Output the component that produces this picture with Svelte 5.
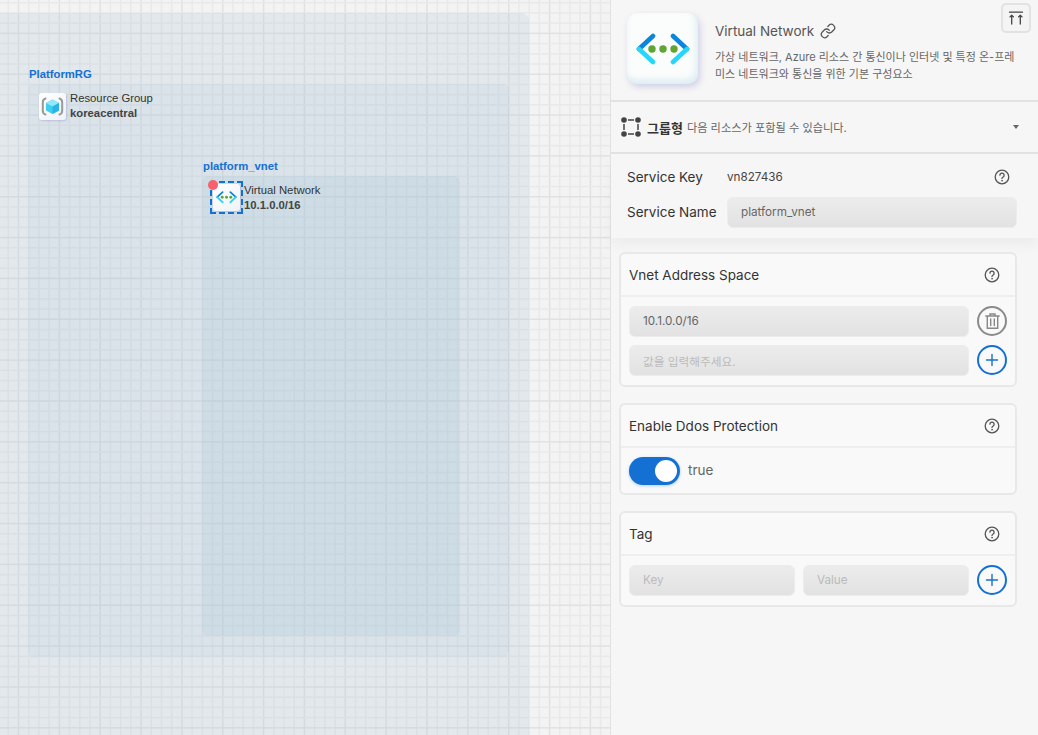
<script>
  const tags = [
    { ph: "Key" },
    { ph: "Value" }
  ];

  // canvas grid: thin line every 10.2125px, stronger one every 4th
  const STEP = 10.2125;
  const vLines = Array.from({ length: 62 }, (_, i) => ({ at: 17.75 - STEP * 4 + STEP * i, major: i % 4 === 0 }));
  const hLines = Array.from({ length: 75 }, (_, i) => ({ at: 32.6 - STEP * 4 + STEP * i, major: i % 4 === 0 }));
</script>

{#snippet help()}
  <svg class="help" width="16" height="16" viewBox="0 0 16 16" fill="none" stroke="#555" stroke-width="1.3" stroke-linecap="round">
    <circle cx="8" cy="8" r="6.8" />
    <path d="M5.9 6.2a2.1 2.1 0 1 1 3.2 1.8c-.7.4-1.1.8-1.1 1.6" />
    <circle cx="8" cy="11.7" r=".5" fill="#555" stroke-width=".6" />
  </svg>
{/snippet}

{#snippet vnetIcon(w)}
  <svg width={w} height={w * 32 / 54} viewBox="0 0 54 32" fill="none" stroke-width="4.6" stroke-linecap="round">
    <path d="M17 3 3 16" stroke="#0a86da" />
    <path d="M3 16 17 29" stroke="#28d6fc" />
    <path d="M37 3 51 16" stroke="#0a86da" />
    <path d="M51 16 37 29" stroke="#28d6fc" />
    <circle cx="16" cy="16" r="3.7" fill="#5ea532" stroke="none" />
    <circle cx="27" cy="16" r="3.7" fill="#5ea532" stroke="none" />
    <circle cx="38" cy="16" r="3.7" fill="#5ea532" stroke="none" />
  </svg>
{/snippet}

{#snippet plus()}
  <button class="round add" aria-label="add">
    <svg width="14" height="14" viewBox="0 0 14 14" stroke="#1570d4" stroke-width="1.4" stroke-linecap="round">
      <path d="M7 1.5v11M1.5 7h11" />
    </svg>
  </button>
{/snippet}

<div class="page">
  <main class="canvas">
    <svg class="grid" width="610" height="735" aria-hidden="true">
      {#each vLines as l}
        <rect x={l.at} y="0" width="1.5" height="735" fill={l.major ? "#e1e1e1" : "#e9e9e9"} />
      {/each}
      {#each hLines as l}
        <rect x="0" y={l.at} width="610" height="1.5" fill={l.major ? "#e1e1e1" : "#e9e9e9"} />
      {/each}
    </svg>
    <section class="group rg-outer">
      <div class="label rg-label">PlatformRG</div>
      <div class="rg-box">
        <div class="node rg-node">
          <div class="node-icon">
            <svg width="23" height="23" viewBox="0 0 23 23" fill="none">
              <path d="M4.500 3.500C2.500 4 1.800 5.500 1.800 7.500v8c0 2 .7 3.500 2.700 4" stroke="#999" stroke-width="2" stroke-linecap="round" />
              <path d="M18.500 3.500c2 .5 2.700 2 2.700 4v8c0 2-.7 3.500-2.700 4" stroke="#999" stroke-width="2" stroke-linecap="round" />
              <path d="M11.500 4.500 18 8v7.500L11.500 19 5 15.500V8z" fill="#3fcdf0" />
              <path d="M11.500 4.500 18 8l-6.500 3.500L5 8z" fill="#8eeafc" />
              <path d="M11.500 11.500 18 8v7.500L11.500 19z" fill="#28b4e4" />
            </svg>
          </div>
          <div class="node-text">
            <div>Resource Group</div>
            <strong>koreacentral</strong>
          </div>
        </div>

        <div class="vnet-wrap">
          <div class="label">platform_vnet</div>
          <div class="vnet-box">
            <div class="node vnet-node">
              <div class="selected">
                <span class="dot"></span>
                <div class="node-icon small">
                  {@render vnetIcon(21)}
                </div>
              </div>
              <div class="node-text">
                <div>Virtual Network</div>
                <strong>10.1.0.0/16</strong>
              </div>
            </div>
          </div>
        </div>
      </div>
    </section>
  </main>

  <aside class="panel">
    <header class="head">
      <div class="big-icon">{@render vnetIcon(54)}</div>
      <div class="head-text">
        <div class="title">
          Virtual Network
          <svg width="16" height="16" viewBox="0 0 24 24" fill="none" stroke="#555" stroke-width="1.900" stroke-linecap="round" stroke-linejoin="round">
            <path d="M10 13a5 5 0 0 0 7.540.540l3-3a5 5 0 0 0-7.070-7.070l-1.720 1.710" />
            <path d="M14 11a5 5 0 0 0-7.540-.540l-3 3a5 5 0 0 0 7.070 7.070l1.710-1.710" />
          </svg>
        </div>
        <p>가상 네트워크, Azure 리소스 간 통신이나 인터넷 및 특정 온-프레미스 네트워크와 통신을 위한 기본 구성요소</p>
      </div>
      <button class="collapse" aria-label="collapse">
        <svg width="16" height="14" viewBox="0 0 16 14" fill="none" stroke="#444" stroke-width="1.300" stroke-linecap="round" stroke-linejoin="round">
          <path d="M1.500 1.200h13M3.700 13V4.200M2 5.900l1.700-1.700 1.700 1.700M12.300 13V4.200M10.600 5.900l1.700-1.700 1.700 1.700" />
        </svg>
      </button>
    </header>

    <div class="type-row">
      <svg width="20" height="20" viewBox="0 0 20 20" fill="none" stroke="#444" stroke-width="1.500">
        <path d="M7 3h6M7 17h6M3 7v6M17 7v6" />
        <g fill="#444" stroke="none">
          <circle cx="3" cy="3" r="2.800" />
          <circle cx="17" cy="3" r="2.800" />
          <circle cx="3" cy="17" r="2.800" />
          <circle cx="17" cy="17" r="2.800" />
        </g>
      </svg>
      <strong>그룹형</strong>
      <span>다음 리소스가 포함될 수 있습니다.</span>
      <i class="caret"></i>
    </div>

    <div class="service">
      <div class="svc-row key">
        <span class="svc-label">Service Key</span>
        <span class="svc-value">vn827436</span>
        {@render help()}
      </div>
      <div class="svc-row name">
        <span class="svc-label">Service Name</span>
        <div class="field grow">platform_vnet</div>
      </div>
    </div>

    <div class="cards">
      <section class="card">
        <div class="card-head">Vnet Address Space {@render help()}</div>
        <div class="card-body">
          <div class="line">
            <div class="field grow">10.1.0.0/16</div>
            <button class="round trash" aria-label="delete">
              <svg width="15" height="16" viewBox="0 0 15 16" fill="none" stroke="#888" stroke-width="1.400" stroke-linecap="round">
                <path d="M.8 3h13.400M5 2.800V1h5v1.800M2.300 3v12.200h10.400V3M5.700 6v6.500M9.300 6v6.500" />
              </svg>
            </button>
          </div>
          <div class="line">
            <div class="field grow ph">값을 입력해주세요.</div>
            {@render plus()}
          </div>
        </div>
      </section>

      <section class="card">
        <div class="card-head">Enable Ddos Protection {@render help()}</div>
        <div class="card-body toggle-row">
          <div class="switch"><span></span></div>
          <span class="switch-text">true</span>
        </div>
      </section>

      <section class="card">
        <div class="card-head">Tag {@render help()}</div>
        <div class="card-body">
          <div class="line">
            {#each tags as t}
              <div class="field grow ph">{t.ph}</div>
            {/each}
            {@render plus()}
          </div>
        </div>
      </section>
    </div>
  </aside>
</div>

<style>
  :global(body) {
    margin: 0;
    font-family: Inter, "Noto Sans CJK KR", sans-serif;
  }
  .page {
    display: flex;
    width: 1038px;
    height: 735px;
    overflow: hidden;
    background: #f6f6f6;
  }
  .canvas {
    position: relative;
    width: 610px;
    height: 735px;
    flex: none;
    padding-top: 13px;
    box-sizing: border-box;
    background-color: #f3f3f3;
    font-family: "Liberation Sans", Arial, sans-serif;
  }
  .grid {
    position: absolute;
    left: 0;
    top: 0;
  }
  .rg-outer {
    position: relative;
    width: 529px;
    height: 760px;
    border-radius: 0 8px 0 0;
    background: rgba(180, 200, 220, 0.25);
    padding: 54px 20px 0 28px;
    box-sizing: border-box;
  }
  .label {
    color: #1570d4;
    font-size: 11.300px;
    font-weight: 700;
    line-height: 14px;
    margin-left: 1px;
  }
  .rg-box {
    width: 481px;
    height: 573px;
    margin-top: 3px;
    box-sizing: border-box;
    border-radius: 6px;
    background: rgba(165, 190, 210, 0.13);
    padding-top: 9px;
  }
  .node {
    display: flex;
    gap: 4px;
    color: #333;
    font-size: 11.300px;
    line-height: 15px;
  }
  .rg-node {
    margin-left: 11px;
  }
  .rg-node .node-text {
    margin-top: -2px;
  }
  .node-icon {
    width: 27px;
    height: 27px;
    display: flex;
    align-items: center;
    justify-content: center;
    border-radius: 3px;
    background: linear-gradient(135deg, #ffffff, #eef3f6);
    box-shadow: 1px 1px 2px rgba(120, 120, 200, 0.35);
  }
  .node-text {
    white-space: nowrap;
  }
  .node-text strong {
    display: block;
    color: #444;
  }
  .vnet-wrap {
    margin: 38px 0 0 174px;
  }
  .vnet-box {
    width: 258px;
    height: 460px;
    margin-top: 3px;
    border-radius: 6px;
    background: rgba(140, 185, 210, 0.15);
    padding: 6px 0 0 9px;
    box-sizing: border-box;
  }
  .selected {
    position: relative;
    width: 31px;
    height: 31px;
    display: flex;
    align-items: center;
    justify-content: center;
    outline: 2px dashed #1570d4;
    outline-offset: -1px;
  }
  .dot {
    position: absolute;
    left: -3px;
    top: -2px;
    width: 10px;
    height: 10px;
    border-radius: 50%;
    background: #f7606c;
    z-index: 1;
  }
  .vnet-node {
    gap: 2px;
  }
  .vnet-node .node-text {
    margin-top: 1px;
  }

  .panel {
    width: 428px;
    flex: none;
    box-sizing: border-box;
    border-left: 1px solid #e2e2e2;
    box-shadow: -1px 0 2px rgba(0, 0, 0, 0.05);
    background: #f6f6f6;
    color: #333;
    font-size: 13.500px;
  }
  .head {
    position: relative;
    display: flex;
    height: 102px;
    box-sizing: border-box;
    padding: 13px 0 0 16px;
    border-bottom: 2px solid #e2e2e2;
  }
  .big-icon {
    width: 71px;
    height: 71px;
    flex: none;
    display: flex;
    align-items: center;
    justify-content: center;
    border-radius: 10px;
    background: #fbfcfc;
    box-shadow: 2px 3px 6px rgba(120, 120, 200, 0.3), inset -2px -4px 6px rgba(170, 215, 232, 0.4);
  }
  .head-text {
    margin-left: 17px;
    width: 308px;
    padding-top: 8px;
  }
  .title {
    display: flex;
    align-items: center;
    gap: 6px;
    color: #555;
    font-size: 13.500px;
    line-height: 20px;
  }
  .head-text p {
    margin: 8px 0 0;
    color: #666;
    font-size: 11px;
    line-height: 16.500px;
    word-break: break-all;
  }
  .collapse {
    position: absolute;
    top: 3px;
    right: 7px;
    width: 30px;
    height: 30px;
    padding: 0;
    display: flex;
    align-items: center;
    justify-content: center;
    border: 2px solid #e2e2e2;
    border-radius: 5px;
    background: #f4f4f4;
  }
  .type-row {
    display: flex;
    align-items: center;
    height: 52px;
    box-sizing: border-box;
    padding: 0 19px 0 10px;
    border-bottom: 2px solid #e2e2e2;
    color: #666;
    font-size: 11.200px;
  }
  .type-row svg {
    margin-right: 6px;
  }
  .type-row strong {
    color: #333;
    font-size: 13px;
    font-weight: 600;
    margin-right: 4px;
  }
  .caret {
    margin-left: auto;
    border: 3.500px solid transparent;
    border-top: 4px solid #666;
    border-bottom: 0;
  }
  .service {
    position: relative;
    padding: 8px 21px 10px 16px;
    height: 84px;
    box-sizing: border-box;
    background: #f6f6f6;
    box-shadow: 0 8px 12px rgba(0, 0, 0, 0.04);
  }
  .svc-row {
    display: flex;
    align-items: center;
  }
  .svc-row.key {
    height: 30px;
    margin-bottom: 5px;
  }
  .name .svc-label {
    margin-top: -2px;
  }
  .svc-label {
    width: 100px;
    flex: none;
  }
  .svc-value {
    flex: 1;
    font-size: 11.700px;
    color: #444;
  }
  .key .help {
    margin-right: 7px;
  }
  .field {
    height: 31px;
    box-sizing: border-box;
    padding: 0 13px 1px;
    display: flex;
    align-items: center;
    border: 1px solid #ececec;
    border-radius: 6px;
    background: linear-gradient(#ececec, #e2e2e2);
    color: #666;
    font-size: 11.700px;
  }
  .grow {
    flex: 1;
    min-width: 0;
  }
  .ph {
    color: #bbb;
  }
  .cards {
    padding: 14px 21px 0 8px;
    display: flex;
    flex-direction: column;
    gap: 16px;
  }
  .card {
    position: relative;
    border: 2px solid #e8e8e8;
    border-radius: 6px;
    background: #f9f9f9;
  }
  .card-head {
    display: flex;
    justify-content: space-between;
    align-items: center;
    height: 43px;
    box-sizing: border-box;
    padding: 1px 15px 0 8px;
    border-bottom: 2px solid #eeeeee;
  }
  .card-body {
    padding: 9px 8px;
    display: flex;
    flex-direction: column;
    gap: 8px;
  }
  .line {
    display: flex;
    gap: 8px;
    align-items: flex-start;
  }
  .round {
    width: 30px;
    height: 30px;
    flex: none;
    padding: 0;
    display: flex;
    align-items: center;
    justify-content: center;
    border-radius: 50%;
    background: transparent;
    box-sizing: border-box;
  }
  .add {
    border: 2px solid #1570d4;
  }
  .trash {
    border: 2px solid #8a8a8a;
  }
  .toggle-row {
    flex-direction: row;
    align-items: center;
    gap: 8px;
    height: 45px;
    padding: 9px 8px 8px;
    box-sizing: border-box;
  }
  .switch {
    width: 51px;
    height: 28px;
    border-radius: 14px;
    background: #1570d4;
    display: flex;
    align-items: center;
    justify-content: flex-end;
    padding-right: 3px;
    box-sizing: border-box;
    box-shadow: 0 1px 3px rgba(21, 112, 212, 0.3);
  }
  .switch span {
    width: 22px;
    height: 22px;
    border-radius: 50%;
    background: #fff;
  }
  .switch-text {
    color: #666;
    font-size: 13.500px;
    margin-top: -2px;
  }
</style>
